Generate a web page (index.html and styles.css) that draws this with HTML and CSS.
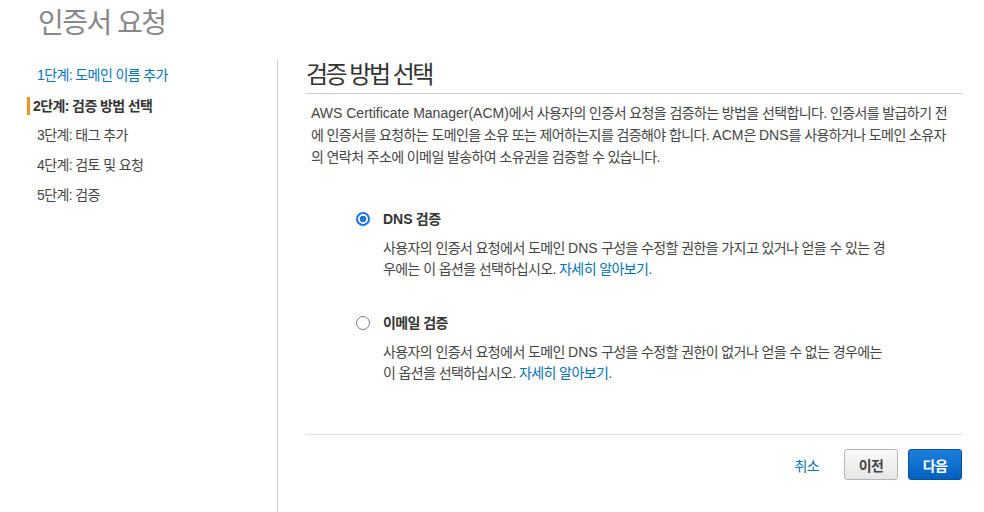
FILE: index.html
```html
<!DOCTYPE html>
<html lang="ko">
<head>
<meta charset="utf-8">
<title>인증서 요청</title>
<link rel="stylesheet" href="styles.css">
</head>
<body>
<header class="page-header">
  <h1 class="page-title">인증서 요청</h1>
</header>
<div class="layout">
  <nav class="steps">
    <a class="step step-link" href="#">1단계: 도메인 이름 추가</a>
    <div class="step step-active"><span class="step-marker">2단계: 검증 방법 선택</span></div>
    <div class="step">3단계: 태그 추가</div>
    <div class="step">4단계: 검토 및 요청</div>
    <div class="step">5단계: 검증</div>
  </nav>
  <main class="content">
    <h2 class="section-title">검증 방법 선택</h2>
    <p class="intro"><span class="en">AWS Certificate Manager(ACM)</span>에서 사용자의 인증서 요청을 검증하는 방법을 선택합니다. 인증서를 발급하기 전에 인증서를 요청하는 도메인을 소유 또는 제어하는지를 검증해야 합니다. <span class="en">ACM</span>은 <span class="en">DNS</span>를 사용하거나 도메인 소유자의 연락처 주소에 이메일 발송하여 소유권을 검증할 수 있습니다.</p>
    <div class="options">
      <div class="option">
        <span class="radio radio-checked"></span>
        <div class="option-body">
          <div class="option-label"><span class="en">DNS</span> 검증</div>
          <p class="option-desc">사용자의 인증서 요청에서 도메인 <span class="en">DNS</span> 구성을 수정할 권한을 가지고 있거나 얻을 수 있는 경우에는 이 옵션을 선택하십시오. <a class="link" href="#">자세히 알아보기.</a></p>
        </div>
      </div>
      <div class="option option-second">
        <span class="radio"></span>
        <div class="option-body">
          <div class="option-label">이메일 검증</div>
          <p class="option-desc">사용자의 인증서 요청에서 도메인 <span class="en">DNS</span> 구성을 수정할 권한이 없거나 얻을 수 없는 경우에는 이 옵션을 선택하십시오. <a class="link" href="#">자세히 알아보기.</a></p>
        </div>
      </div>
    </div>
    <div class="footer">
      <a class="cancel" href="#">취소</a>
      <button class="btn" type="button">이전</button>
      <button class="btn btn-primary" type="button">다음</button>
    </div>
  </main>
</div>
</body>
</html>
```

FILE: styles.css
```css
* {
  box-sizing: border-box;
}

body {
  margin: 0;
  background: #fff;
  font-family: "Liberation Sans", "Noto Sans CJK KR", sans-serif;
  font-size: 14px;
  letter-spacing: -0.6px;
  color: #444;
}

.en {
  letter-spacing: 0;
}

.page-header {
  height: 60px;
}

.page-title {
  margin: 0;
  padding-left: 38px;
  font-size: 28px;
  font-weight: normal;
  line-height: 48px;
  letter-spacing: -1.5px;
  color: #888;
}

.layout {
  display: flex;
  min-height: 452px;
}

.steps {
  width: 278px;
  flex: none;
  padding-left: 27px;
  border-right: 1px solid #ccc;
  display: flex;
  flex-direction: column;
}

.step {
  display: block;
  height: 30px;
  line-height: 30px;
  padding-left: 10px;
  color: #444;
  text-decoration: none;
}

.step-link {
  color: #0073bb;
}

.step-active {
  padding-left: 0;
  font-weight: bold;
  color: #333;
}

.step-marker {
  display: inline-block;
  vertical-align: middle;
  line-height: 18px;
  border-left: 3px solid #f7901e;
  padding-left: 3px;
}

.content {
  flex: 1;
  padding: 0 22px 0 28px;
}

.section-title {
  margin: 0;
  font-size: 24px;
  font-weight: normal;
  line-height: 30px;
  letter-spacing: -2.5px;
  color: #333;
  padding-bottom: 3px;
  border-bottom: 1px solid #ccc;
}

.intro {
  margin: 8px 0 0;
  padding: 0 10px 0 5px;
  line-height: 22px;
  color: #444;
}

.options {
  margin-top: 40px;
  padding-left: 50px;
}

.option {
  display: flex;
  gap: 13px;
}

.option-second {
  margin-top: 32px;
}

.radio {
  flex: none;
  width: 14px;
  height: 14px;
  margin-top: 4px;
  border: 1px solid #7a7a7a;
  border-radius: 50%;
  background: #fff;
}

.radio-checked {
  border: 2px solid #1a73e8;
  background: radial-gradient(circle, #1a73e8 0, #1a73e8 3px, #fff 3.6px);
}

.option-label {
  line-height: 22px;
  font-weight: bold;
  color: #333;
}

.option-desc {
  margin: 8px 0 0;
  max-width: 508px;
  line-height: 21px;
  color: #444;
}

.link {
  color: #0073bb;
  text-decoration: none;
}

.footer {
  margin-top: 50px;
  border-top: 1px solid #ddd;
  padding-top: 14px;
  display: flex;
  justify-content: flex-end;
  align-items: center;
  gap: 10px;
}

.cancel {
  color: #0073bb;
  text-decoration: none;
  margin-right: 15px;
}

.btn {
  width: 54px;
  height: 31px;
  padding: 0;
  border: 1px solid #b5b5b5;
  border-radius: 3px;
  background: linear-gradient(#fafafa, #e6e6e6);
  font-family: "Liberation Sans", "Noto Sans CJK KR", sans-serif;
  font-size: 14px;
  font-weight: bold;
  letter-spacing: -0.6px;
  color: #444;
}

.btn-primary {
  border-color: #0a4f99;
  background: linear-gradient(#1c7fdc, #0361bf);
  color: #fff;
}
```
